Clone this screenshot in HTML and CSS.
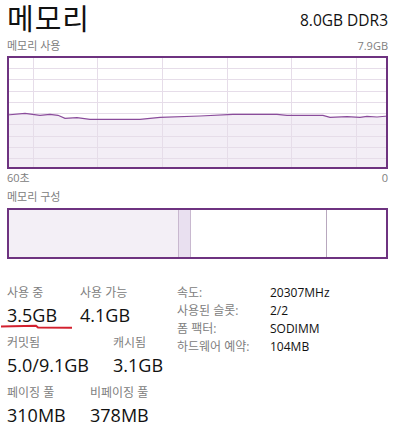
FILE: index.html
```html
<!DOCTYPE html>
<html lang="ko">
<head>
  <meta charset="UTF-8" />
  <meta name="viewport" content="width=device-width, initial-scale=1.0"/>
  <title>메모리</title>
  <link rel="stylesheet" href="styles.css">
</head>
<body>
  <div class="page">
    <div class="header">
      <h1 class="title">메모리</h1>
      <span class="spec">8.0GB DDR3</span>
    </div>

    <div class="caption-row">
      <span>메모리 사용</span>
      <span>7.9GB</span>
    </div>

    <svg class="graph" width="381" height="113" viewBox="0 0 381 113">
      <path class="graph-fill" d="M0 59 L18 57.3 L33 59.3 L43 58.3 L51 59.3 L58 62.3 L70 61.7 L83 63.3 L133 63.3 L153 61.3 L193 60 L226 58.3 L270 58.3 L280 59.3 L316 59.3 L323 61.3 L340 60.7 L353 61.3 L360 60.3 L370 61 L381 60 L381 113 L0 113 Z"/>
      <g class="grid">
        <line x1="0" y1="12.5" x2="381" y2="12.5"/>
        <line x1="0" y1="23.5" x2="381" y2="23.5"/>
        <line x1="0" y1="35.5" x2="381" y2="35.5"/>
        <line x1="0" y1="46.5" x2="381" y2="46.5"/>
        <line x1="0" y1="57.5" x2="381" y2="57.5"/>
        <line x1="0" y1="68.5" x2="381" y2="68.5"/>
        <line x1="0" y1="80.5" x2="381" y2="80.5"/>
        <line x1="0" y1="91.5" x2="381" y2="91.5"/>
        <line x1="0" y1="102.5" x2="381" y2="102.5"/>
        <line x1="26.5" y1="0" x2="26.5" y2="113"/>
        <line x1="90.5" y1="0" x2="90.5" y2="113"/>
        <line x1="155.5" y1="0" x2="155.5" y2="113"/>
        <line x1="220.5" y1="0" x2="220.5" y2="113"/>
        <line x1="284.5" y1="0" x2="284.5" y2="113"/>
        <line x1="349.5" y1="0" x2="349.5" y2="113"/>
      </g>
      <path class="graph-line" d="M0 59 L18 57.3 L33 59.3 L43 58.3 L51 59.3 L58 62.3 L70 61.7 L83 63.3 L133 63.3 L153 61.3 L193 60 L226 58.3 L270 58.3 L280 59.3 L316 59.3 L323 61.3 L340 60.7 L353 61.3 L360 60.3 L370 61 L381 60"/>
      <rect class="graph-border" x="1" y="1" width="379" height="111"/>
    </svg>

    <div class="axis-row">
      <span>60초</span>
      <span>0</span>
    </div>

    <div class="caption-row section">
      <span>메모리 구성</span>
    </div>

    <div class="composition">
      <div class="seg in-use"></div>
      <div class="seg modified"></div>
      <div class="seg standby"></div>
      <div class="seg free"></div>
    </div>

    <div class="details">
      <div class="stats">
        <div class="stat-row">
          <div class="stat w73">
            <div class="stat-label">사용 중</div>
            <div class="stat-value">3.5GB</div>
            <svg class="underline" width="74" height="6" viewBox="0 0 74 6">
              <path d="M1 2.5 L36 1.8 L38 3.5 L72 3.8"/>
            </svg>
          </div>
          <div class="stat">
            <div class="stat-label">사용 가능</div>
            <div class="stat-value">4.1GB</div>
          </div>
        </div>
        <div class="stat-row">
          <div class="stat w106">
            <div class="stat-label">커밋됨</div>
            <div class="stat-value">5.0/9.1GB</div>
          </div>
          <div class="stat">
            <div class="stat-label">캐시됨</div>
            <div class="stat-value">3.1GB</div>
          </div>
        </div>
        <div class="stat-row">
          <div class="stat w83">
            <div class="stat-label">페이징 풀</div>
            <div class="stat-value">310MB</div>
          </div>
          <div class="stat">
            <div class="stat-label">비페이징 풀</div>
            <div class="stat-value">378MB</div>
          </div>
        </div>
      </div>

      <table class="info">
        <tr><td class="key">속도:</td><td>20307MHz</td></tr>
        <tr><td class="key">사용된 슬롯:</td><td>2/2</td></tr>
        <tr><td class="key">폼 팩터:</td><td>SODIMM</td></tr>
        <tr><td class="key">하드웨어 예약:</td><td>104MB</td></tr>
      </table>
    </div>
  </div>
</body>
</html>
```

FILE: styles.css
```css
body {
  margin: 0;
  background: #fff;
  font-family: "Open Sans", "Noto Sans CJK KR", sans-serif;
  color: #111;
}

.page {
  width: 381px;
  margin-left: 7px;
}

.header {
  display: flex;
  justify-content: space-between;
  align-items: center;
  height: 38px;
}

.title {
  margin: 0;
  font-size: 29px;
  font-weight: 400;
  line-height: 38px;
  letter-spacing: 1px;
}

.spec {
  font-size: 15.5px;
  line-height: 20px;
  margin-top: 2px;
}

.caption-row {
  display: flex;
  justify-content: space-between;
  font-size: 11px;
  line-height: 16px;
  color: #808080;
  height: 16px;
  margin-bottom: 2px;
}

.caption-row.section {
  margin: 2px 0 3px;
}

.graph {
  display: block;
}

.graph-fill {
  fill: #f3eef6;
}

.grid line {
  stroke: #e6dde9;
  stroke-width: 1;
}

.graph-line {
  fill: none;
  stroke: #8a4c9b;
  stroke-width: 1.2;
}

.graph-border {
  fill: none;
  stroke: #6e3380;
  stroke-width: 2;
}

.axis-row {
  display: flex;
  justify-content: space-between;
  font-size: 11px;
  line-height: 18px;
  color: #808080;
}

.composition {
  display: flex;
  height: 47px;
  border: 2px solid #6e3380;
}

.seg.in-use {
  width: 169px;
  background: #f3eff6;
}

.seg.modified {
  width: 11px;
  background: #e9e0f0;
  border-left: 1px solid #c8b8cf;
  border-right: 1px solid #c8b8cf;
}

.seg.standby {
  width: 135px;
  background: #fff;
}

.seg.free {
  flex: 1;
  border-left: 1px solid #b8a8be;
}

.details {
  display: flex;
  align-items: flex-start;
  margin-top: 25px;
}

.stats {
  width: 170px;
}

.stat-row {
  display: flex;
  height: 50px;
}

.stat {
  position: relative;
}

.w73 { width: 73px; }
.w106 { width: 106px; }
.w83 { width: 83px; }

.stat-label {
  font-size: 12px;
  line-height: 18px;
  color: #808080;
}

.stat-value {
  font-size: 18px;
  line-height: 24px;
  margin-top: 1px;
  color: #111;
}

.underline {
  position: absolute;
  left: -7px;
  top: 40px;
}

.underline path {
  fill: none;
  stroke: #d3202e;
  stroke-width: 2;
}

.info {
  border-collapse: collapse;
  font-size: 12px;
  margin-top: 0;
}

.info td {
  padding: 0;
  height: 18px;
  line-height: 18px;
  color: #111;
}

.info .key {
  width: 93px;
  color: #808080;
}
```
